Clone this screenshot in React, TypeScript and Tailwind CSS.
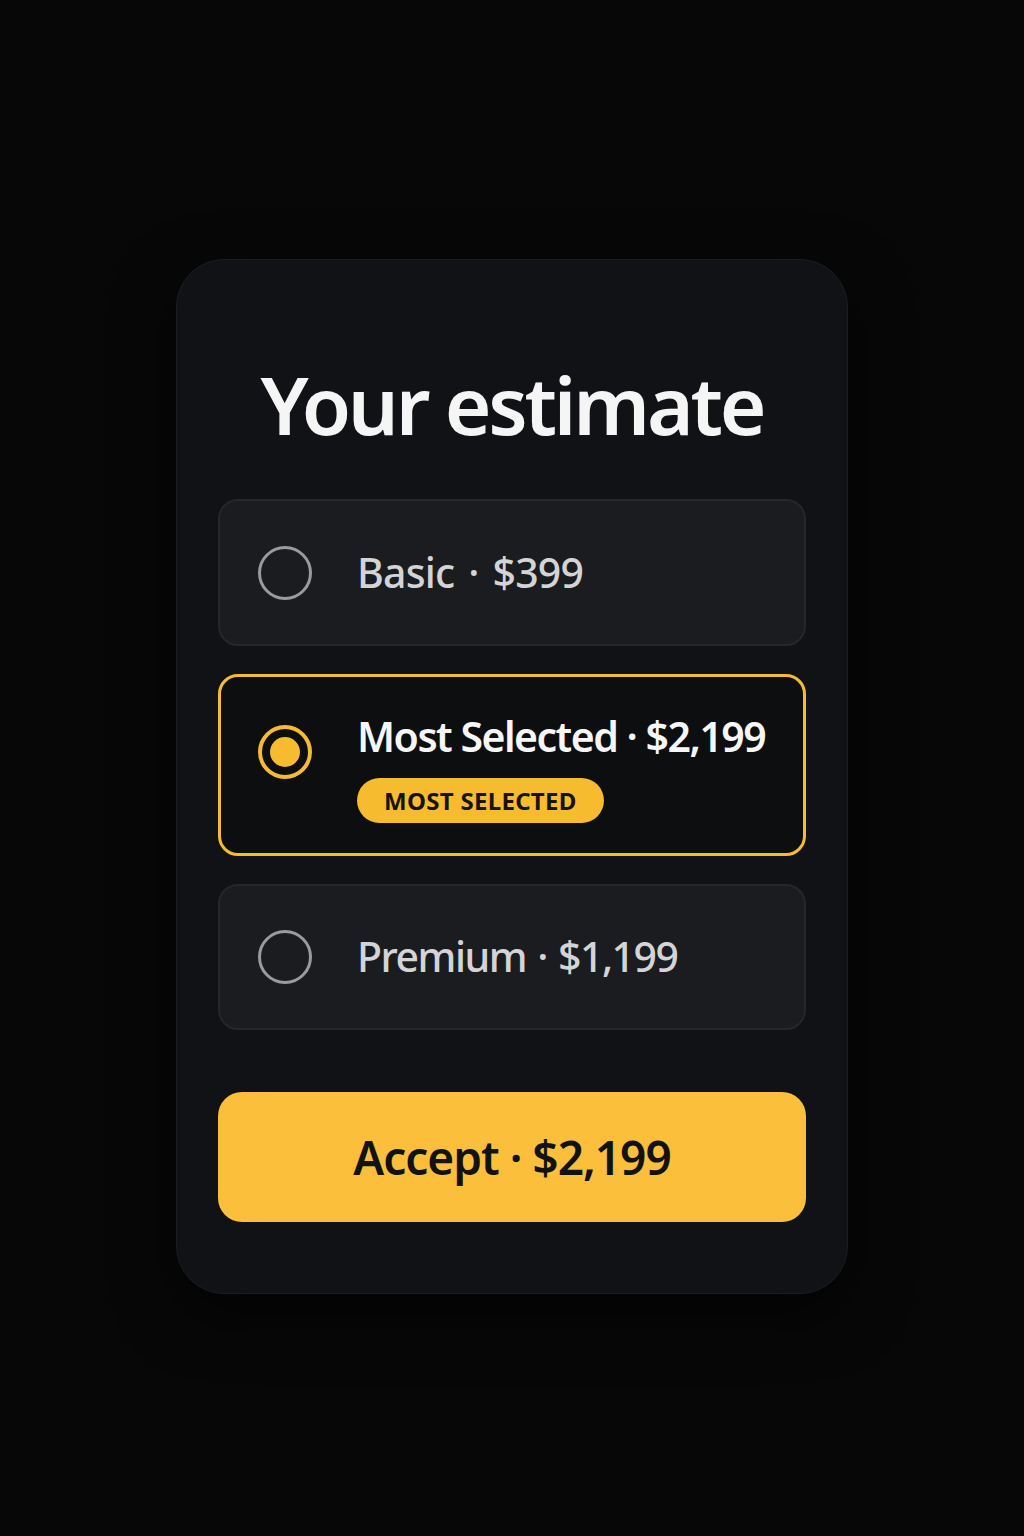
import React from "react";

const font = { fontFamily: '"Noto Sans", "Open Sans", sans-serif' };

const Radio: React.FC<{ checked?: boolean }> = ({ checked }) =>
  checked ? (
    <div className="flex h-[54px] w-[54px] shrink-0 items-center justify-center rounded-full border-[4px] border-[#f7bb2f]">
      <div className="h-[30px] w-[30px] rounded-full bg-[#f7bb2f]" />
    </div>
  ) : (
    <div className="h-[54px] w-[54px] shrink-0 rounded-full border-[3px] border-[#9b9b9d]" />
  );

export default function App() {
  return (
    <div
      className="flex min-h-[1536px] w-full items-start justify-center bg-[#070707] pt-[259px]"
      style={font}
    >
      <div className="flex w-[672px] flex-col rounded-[48px] border border-[#1c1d20] bg-[#111215] px-[41px] pb-[71px] pt-[96px] shadow-[0_20px_60px_rgba(0,0,0,0.6)]">
        <h1 className="text-center text-[80px] font-semibold leading-[96px] tracking-[-3.2px] text-[#f5f5f5]">
          Your estimate
        </h1>

        <div className="mt-[47px] flex flex-col gap-[28px]">
          {/* Basic */}
          <div className="flex h-[147px] items-center gap-[45px] rounded-[20px] border-2 border-[#26272a] bg-[#1b1c1f] pl-[38px]">
            <Radio />
            <span className="whitespace-nowrap text-[41px] font-medium tracking-[-0.8px] text-[#d4d4d6]">
              Basic <span className="mx-[4px]">·</span> $399
            </span>
          </div>

          {/* Most selected */}
          <div className="flex h-[182px] items-start gap-[45px] rounded-[20px] border-[3px] border-[#f7bb2f] bg-[#0d0e10] pl-[37px] pt-[48px]">
            <Radio checked />
            <div className="-mt-[21px] flex flex-col items-start">
              <span className="whitespace-nowrap text-[41px] font-semibold leading-[64px] tracking-[-1.5px] text-[#f7f7f7]">
                Most Selected · $2,199
              </span>
              <span className="mt-[10px] rounded-full bg-[#f7bb2f] px-[27px] text-[24px] font-bold leading-[45px] tracking-[0.3px] text-[#16130a]">
                MOST SELECTED
              </span>
            </div>
          </div>

          {/* Premium */}
          <div className="flex h-[146px] items-center gap-[45px] rounded-[20px] border-2 border-[#26272a] bg-[#1b1c1f] pl-[38px]">
            <Radio />
            <span className="whitespace-nowrap text-[41px] font-medium tracking-[-1.5px] text-[#d4d4d6]">
              Premium <span className="mx-[2px]">·</span> $1,199
            </span>
          </div>
        </div>

        <button className="mt-[62px] flex h-[130px] items-center justify-center whitespace-nowrap rounded-[24px] bg-[#fbbf3b] text-[46px] font-semibold tracking-[-1px] text-[#121212]">
          Accept · $2,199
        </button>
      </div>
    </div>
  );
}
